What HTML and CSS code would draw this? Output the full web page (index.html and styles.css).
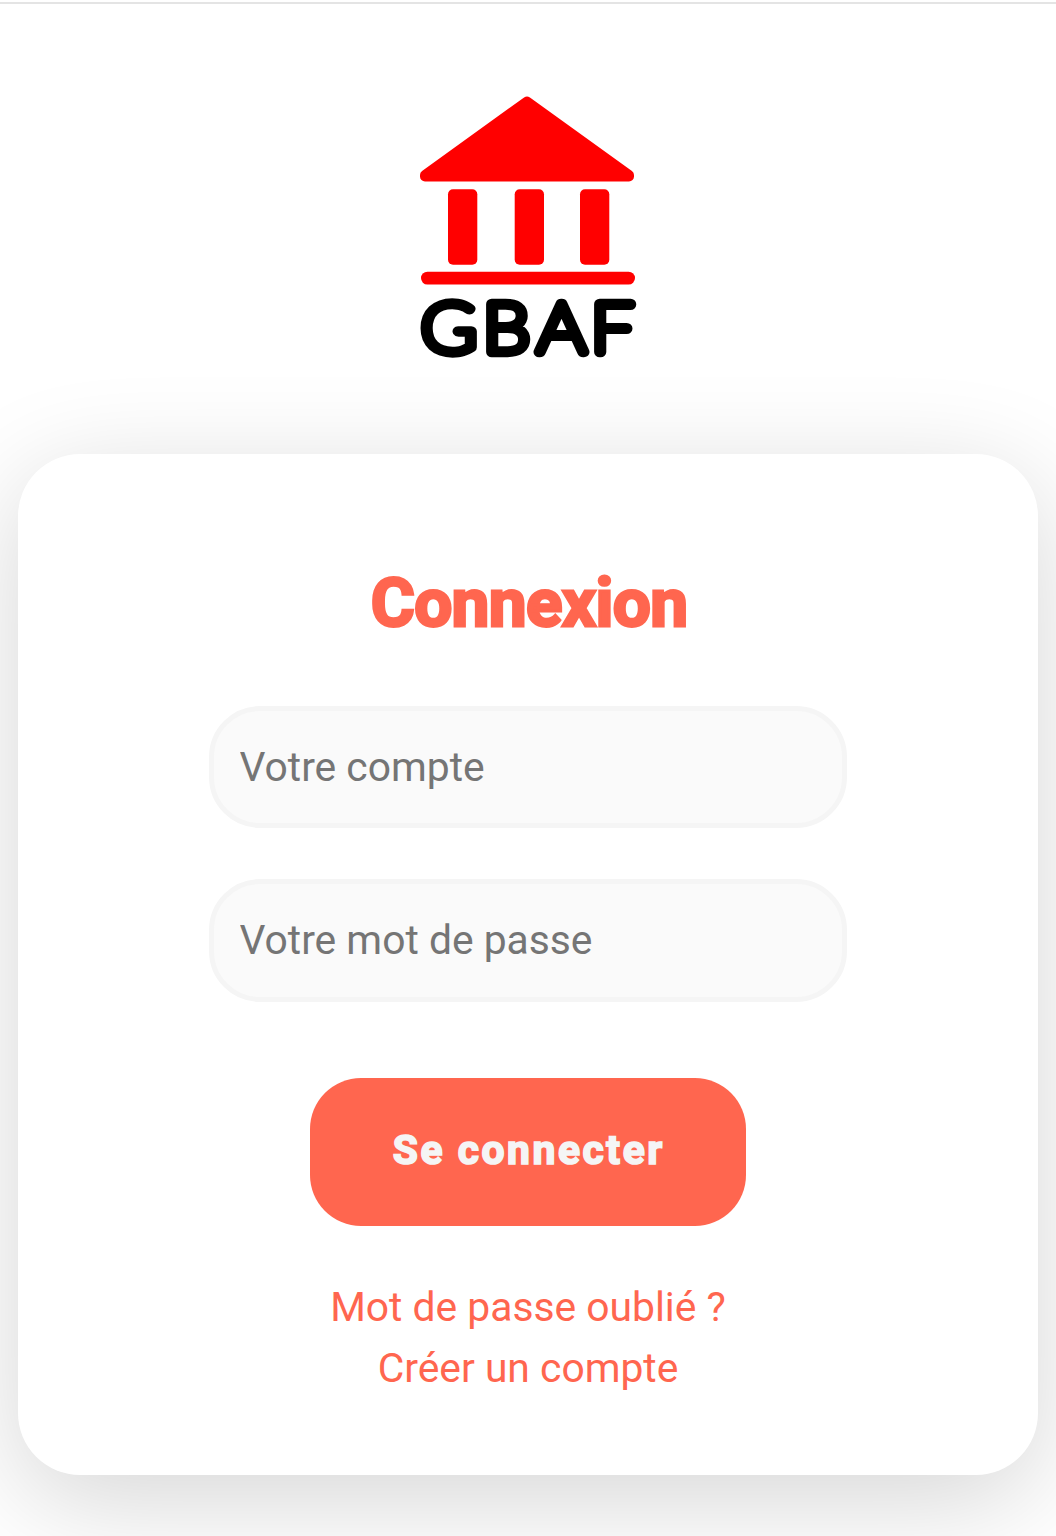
FILE: index.html
```html
<!DOCTYPE html>
<html lang="fr">
<head>
<meta charset="utf-8">
<title>GBAF - Connexion</title>
<link rel="stylesheet" href="styles.css">
</head>
<body>
<header class="header">
  <svg class="logo" viewBox="398 94 260 288" role="img" aria-label="GBAF">
    <g class="logo-building">
      <path d="M527 101.500L629 175V176.500H425V175Z" stroke-width="10" stroke-linejoin="round"/>
      <rect x="448" y="189.300" width="29.300" height="75.400" rx="5"/>
      <rect x="514.700" y="189.300" width="29.300" height="75.400" rx="5"/>
      <rect x="580" y="189.300" width="29.300" height="75.400" rx="5"/>
      <rect x="421" y="271.700" width="214" height="12.800" rx="6.400"/>
    </g>
    <text class="logo-name" transform="scale(1.1 1)" x="382.800 439 488.700 537.300" y="352.300">GBAF</text>
  </svg>
</header>
<main class="card">
  <h1 class="title">Connexion</h1>
  <form class="form">
    <input class="field" type="text" placeholder="Votre compte">
    <input class="field field-password" type="password" placeholder="Votre mot de passe">
    <button class="submit" type="button">Se connecter</button>
  </form>
  <nav class="links">
    <a class="link" href="#">Mot de passe oublié ?</a>
    <a class="link" href="#">Créer un compte</a>
  </nav>
</main>
</body>
</html>
```
FILE: styles.css
```css
* { box-sizing: border-box; }
html { height: 100%; overflow: hidden; }
body {
  margin: 0;
  height: 1536px;
  padding: 2px 18px 0;
  overflow: hidden;
  background: #fff;
  font-family: Roboto, sans-serif;
  font-size: 40.8px;
}
.header {
  height: 452px;
  margin: 0 -18px;
  padding-top: 90px;
  border-top: 2px solid #e4e4e4;
  text-align: center;
}
.logo { display: block; width: 260px; height: 288px; margin: 0 auto; overflow: visible; }
.logo-building { fill: #f00; }
.logo-building path { stroke: #f00; }
.logo-name {
  font-family: Lato, sans-serif;
  font-weight: 100;
  font-size: 68.500px;
  fill: #000;
  stroke: #000;
  stroke-width: 10.800px;
  stroke-linejoin: round;
  vector-effect: non-scaling-stroke;
}
.card {
  display: flex;
  flex-direction: column;
  align-items: center;
  height: 1021px;
  padding-top: 108px;
  border-radius: 62px;
  background: #fff;
  box-shadow: 0 25.5px 109px rgba(0, 0, 0, .163);
}
.title {
  margin: 0;
  height: 82px;
  padding-left: 2px;
  line-height: 82px;
  font-size: 67.5px;
  font-weight: 700;
  letter-spacing: -.65px;
  color: #ff664f;
  -webkit-text-stroke: 2.8px #ff664f;
}
.form {
  display: flex;
  flex-direction: column;
  align-items: center;
  margin-top: 62px;
}
.field {
  width: 638px;
  height: 122.400px;
  margin: 0 0 51px;
  padding: 0 25.5px;
  border: 5px solid #f5f5f5;
  border-radius: 51px;
  background: #fafafa;
  font: inherit;
}
.field::placeholder { color: #757575; }
.field-password { padding-bottom: 2px; }
.submit {
  width: 436px;
  height: 148px;
  margin-top: 25.200px;
  padding: 0 0 3px 1.500px;
  border: 0;
  border-radius: 51px;
  background: #ff664f;
  color: #f5f5f5;
  font: 700 40.8px Roboto, sans-serif;
  letter-spacing: 2.55px;
  -webkit-text-stroke: 1.7px #f5f5f5;
}
.links {
  display: flex;
  flex-direction: column;
  align-items: center;
  margin-top: 51px;
}
.link {
  line-height: 61px;
  color: #ff664f;
  text-decoration: none;
}
```
